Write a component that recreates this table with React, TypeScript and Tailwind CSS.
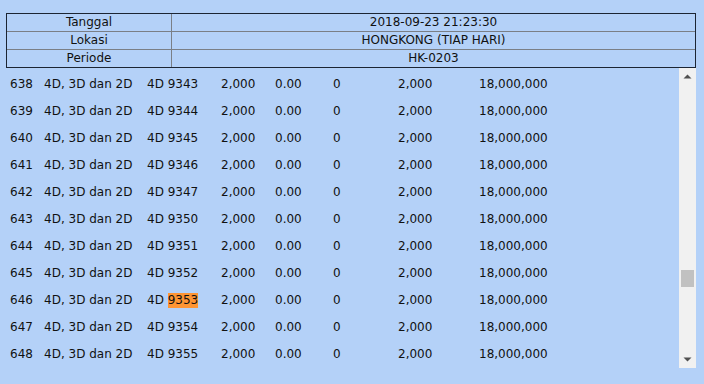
import React from "react";

const rows = [
  [638, "9343"],
  [639, "9344"],
  [640, "9345"],
  [641, "9346"],
  [642, "9347"],
  [643, "9350"],
  [644, "9351"],
  [645, "9352"],
  [646, "9353"],
  [647, "9354"],
  [648, "9355"],
] as const;

export default function App() {
  return (
    <div
      className="w-[704px] h-[384px] bg-[#b4d1f8] pt-[13px] px-[6px] text-[#111] overflow-hidden"
      style={{ fontFamily: '"DejaVu Sans", Verdana, sans-serif' }}
    >
      <div className="w-[690px] border border-[#1c2533] text-[12px] leading-[17px]">
        {[
          ["Tanggal", "2018-09-23 21:23:30"],
          ["Lokasi", "HONGKONG (TIAP HARI)"],
          ["Periode", "HK-0203"],
        ].map(([a, b], i) => (
          <div
            key={a}
            className={`flex h-[17px] ${i < 2 ? "border-b border-[#7a7f86] box-content" : ""}`}
          >
            <div className="w-[164px] text-center border-r border-[#7a7f86] box-content">{a}</div>
            <div className="flex-1 text-center">{b}</div>
          </div>
        ))}
      </div>
      <div className="flex w-[690px] h-[300px]">
        <div className="flex-1 pt-[2px] pl-[4px] text-[12px]">
          {rows.map(([n, num]) => (
            <div key={n} className="flex h-[27px] items-center">
              <span className="w-[34px]">{n}</span>
              <span className="w-[103px]">4D, 3D dan 2D</span>
              <span className="w-[74px]">
                4D{" "}
                {num === "9353" ? (
                  <span className="bg-[#fe9534] leading-[15px] inline-block">{num}</span>
                ) : (
                  num
                )}
              </span>
              <span className="w-[54px]">2,000</span>
              <span className="w-[58px]">0.00</span>
              <span className="w-[65px]">0</span>
              <span className="w-[81px]">2,000</span>
              <span>18,000,000</span>
            </div>
          ))}
        </div>
        <div className="w-[17px] h-[300px] bg-[#f1f1f1] flex flex-col items-center">
          <div className="h-[17px] flex items-center justify-center">
            <svg width="9" height="5" viewBox="0 0 9 5">
              <path d="M4.5 0.5 L8.5 4.5 L0.5 4.5 Z" fill="#505050" />
            </svg>
          </div>
          <div className="h-[185px]" />
          <div className="w-[13px] h-[17px] bg-[#c1c1c1]" />
          <div className="flex-1" />
          <div className="h-[17px] flex items-center justify-center">
            <svg width="9" height="5" viewBox="0 0 9 5">
              <path d="M0.5 0.5 L8.5 0.5 L4.5 4.5 Z" fill="#505050" />
            </svg>
          </div>
        </div>
      </div>
    </div>
  );
}
